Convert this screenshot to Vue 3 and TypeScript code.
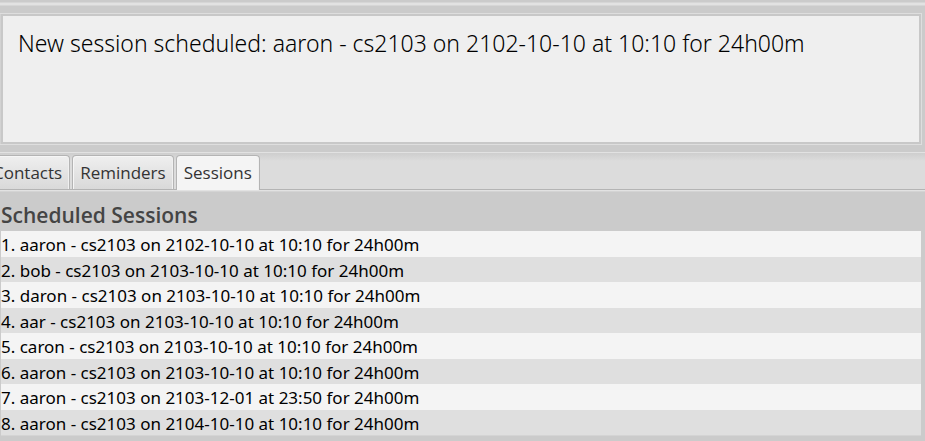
<script setup lang="ts">
import { ref } from 'vue'

interface Session {
  student: string
  subject: string
  date: string
  time: string
  duration: string
}

const tabs: string[] = ['Contacts', 'Reminders', 'Sessions']
const activeTab = ref('Sessions')
const result = ref('New session scheduled: aaron - cs2103 on 2102-10-10 at 10:10 for 24h00m')

const makeSession = (student: string, date: string, time = '10:10'): Session => ({
  student,
  subject: 'cs2103',
  date,
  time,
  duration: '24h00m',
})

const sessions: Session[] = [
  makeSession('aaron', '2102-10-10'),
  makeSession('bob', '2103-10-10'),
  makeSession('daron', '2103-10-10'),
  makeSession('aar', '2103-10-10'),
  makeSession('caron', '2103-10-10'),
  makeSession('aaron', '2103-10-10'),
  makeSession('aaron', '2103-12-01', '23:50'),
  makeSession('aaron', '2104-10-10'),
]
</script>

<template>
  <main class="app">
    <div class="divider"></div>
    <section class="result">
      <textarea class="result-text" aria-label="Result" readonly :value="result"></textarea>
    </section>
    <div class="tab-strip" role="tablist">
      <button
        v-for="tab in tabs"
        :key="tab"
        type="button"
        role="tab"
        class="tab"
        :class="{ active: tab === activeTab }"
        :aria-selected="tab === activeTab"
        @click="activeTab = tab"
      >
        {{ tab }}
      </button>
    </div>
    <section v-if="activeTab === 'Sessions'" class="panel">
      <h2 class="title">Scheduled Sessions</h2>
      <ol class="list">
        <li v-for="(s, i) in sessions" :key="i" class="row">
          {{ i + 1 }}. {{ s.student }} - {{ s.subject }} on {{ s.date }} at {{ s.time }} for {{ s.duration }}
        </li>
      </ol>
    </section>
  </main>
</template>

<style>
body {
  background: #cbcbcb;
}
</style>

<style scoped>
.app {
  display: flex;
  flex-direction: column;
  min-height: 100vh;
  box-sizing: border-box;
  padding-top: 2px;
  overflow: hidden;
  background: #cbcbcb;
  font-family: 'Noto Sans', 'Open Sans', sans-serif;
}

.divider {
  height: 2px;
  border-top: 1px solid #d6d6d6;
  border-bottom: 1px solid #d6d6d6;
  background: #e2e2e2;
}

.result {
  display: flex;
  margin: 7px 3px 7px 0;
  padding: 0 0 0 1px;
  border: 1px solid #dedede;
  border-left: 0;
  background: #d2d2d2;
}

.result-text {
  flex: 1;
  box-sizing: border-box;
  height: 130px;
  padding: 10px 15px;
  border: 2px solid #c8c8c8;
  outline: none;
  resize: none;
  background: #efefef;
  color: #000;
  font-family: inherit;
  font-size: 23px;
  font-weight: 300;
  line-height: 34px;
}

.tab-strip {
  display: flex;
  gap: 2px;
  height: 34px;
  padding-top: 2px;
  margin-left: -15px;
  border-top: 1px solid #e2e2e2;
  border-bottom: 1px solid #b4b4b4;
  background: linear-gradient(#cecece, #dcdcdc 8px);
  box-shadow: 0 1px #e2e2e2, 0 2px #d4d4d4;
}

.tab {
  box-sizing: border-box;
  height: 34px;
  padding: 0 7px;
  border: 1px solid #b4b4b4;
  border-bottom: 0;
  border-radius: 4px 4px 0 0;
  background: linear-gradient(#efefef, #d9d9d9);
  box-shadow: inset 1px 1px #f6f6f6, inset -1px 0 #f0f0f0;
  color: #333;
  font-family: 'Open Sans', sans-serif;
  font-size: 17px;
  line-height: 34px;
}

.tab.active {
  height: 35px;
  background: #f4f4f4;
}

.panel {
  padding: 10px 4px 5px 1px;
}

.title {
  margin: 0 0 1px;
  color: #444;
  font-family: 'Open Sans', sans-serif;
  font-size: 21px;
  font-weight: 600;
  line-height: 30px;
}

.list {
  margin: 0;
  padding: 0;
  border-bottom: 1px solid #d4d4d4;
  list-style: none;
}

.row {
  height: 26px;
  background: #f4f4f4;
  color: #000;
  font-size: 17px;
  line-height: 27px;
  white-space: nowrap;
}

.row:nth-child(even) {
  height: 25px;
  background: #dfdfdf;
}
</style>
